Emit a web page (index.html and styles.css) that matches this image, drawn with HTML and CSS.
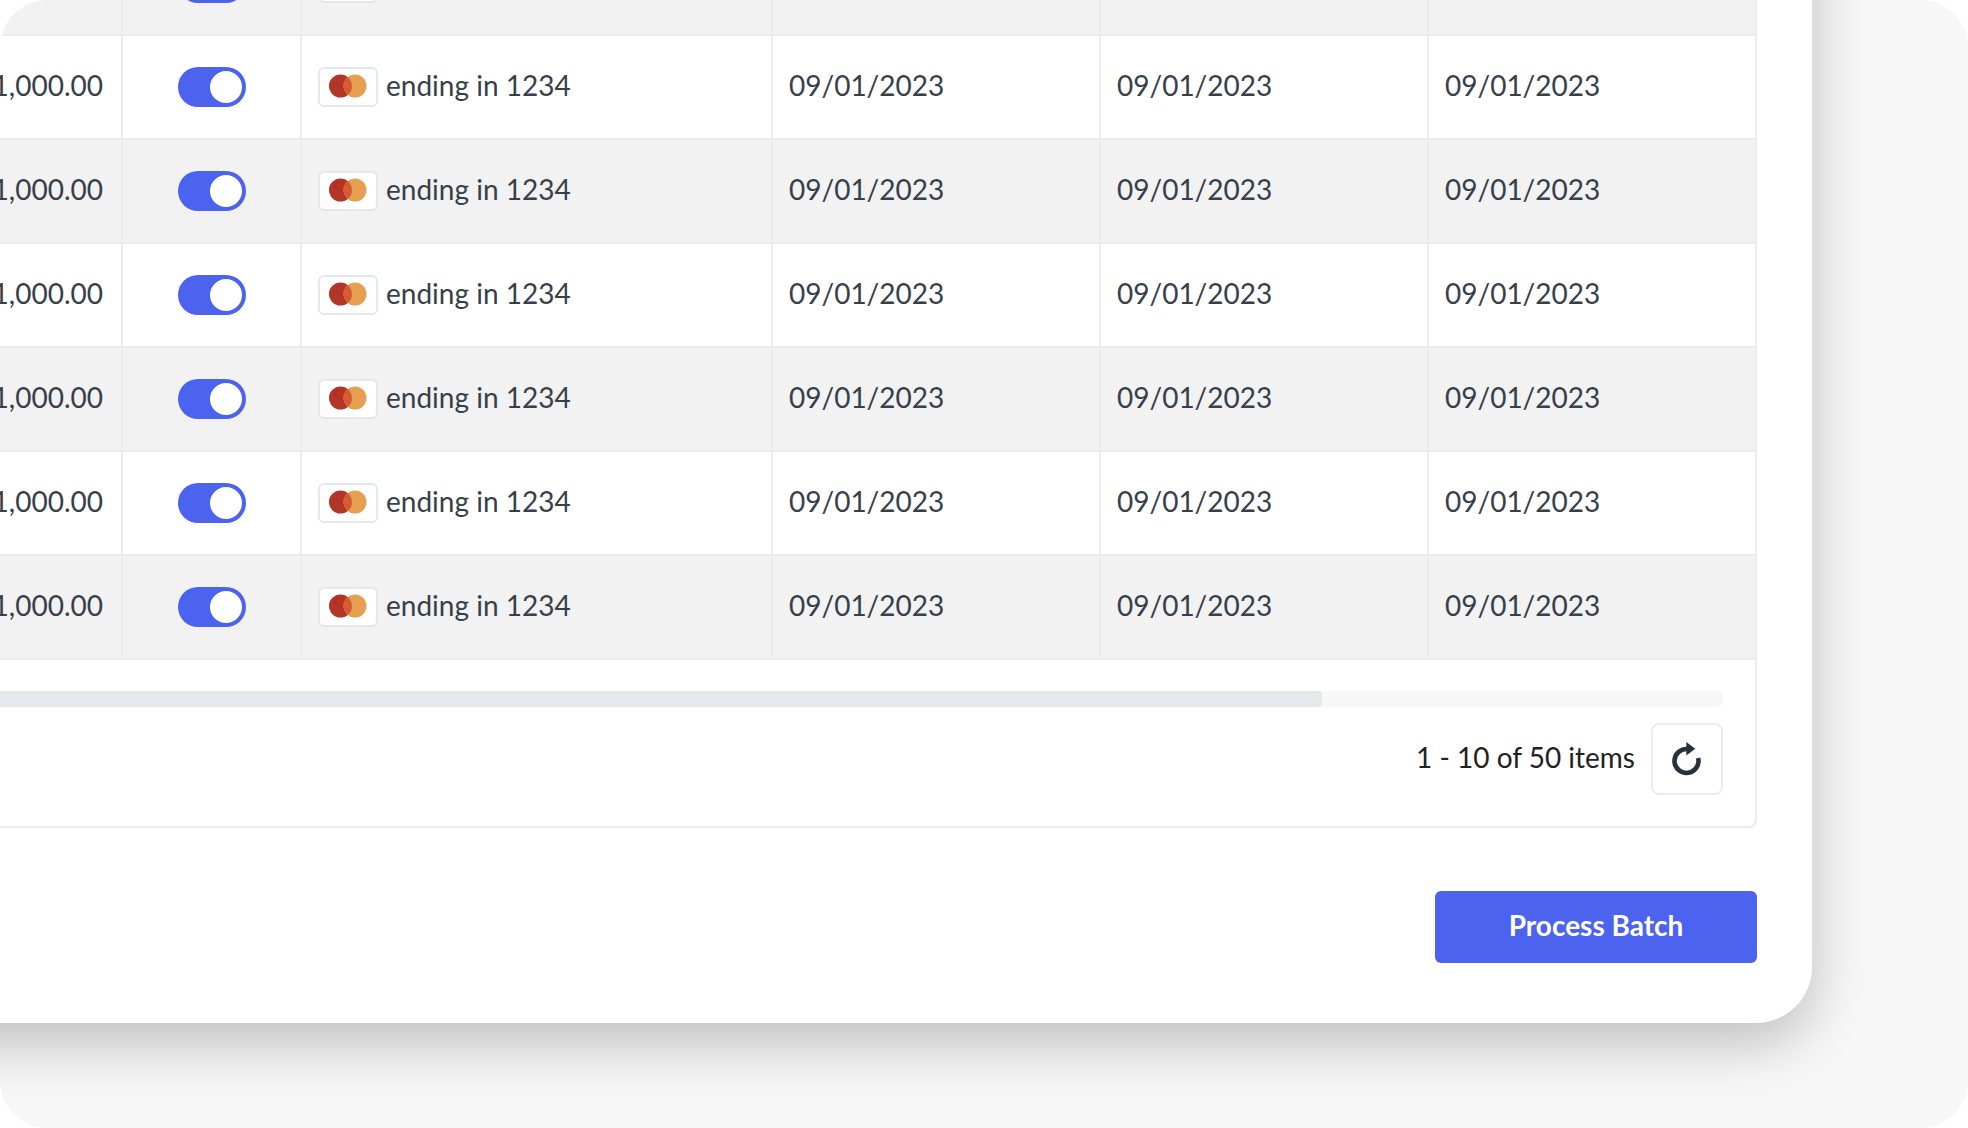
FILE: index.html
```html
<!DOCTYPE html>
<html lang="en">
<head>
  <meta charset="UTF-8">
  <meta name="viewport" content="width=device-width, initial-scale=1.0">
  <title>Batch Payments</title>
  <link rel="stylesheet" href="styles.css">
</head>
<body>
  <svg class="defs" aria-hidden="true">
    <symbol id="mastercard" viewBox="0 0 56 36">
      <circle cx="20.500" cy="17" r="11.500" fill="#b23527"/>
      <circle cx="35" cy="17" r="11.500" fill="#e5a04f"/>
      <path d="M27.750 8.100a11.500 11.500 0 0 1 0 17.800a11.500 11.500 0 0 1 0-17.800z" fill="#d85a32"/>
    </symbol>
  </svg>

  <div class="stage">
    <main class="panel">
      <table class="payments">
        <colgroup>
          <col class="col-amount">
          <col class="col-toggle">
          <col class="col-card">
          <col>
          <col>
          <col>
        </colgroup>
        <tbody id="rows"></tbody>
      </table>

      <div class="table-footer">
        <div class="scroll-track"><div class="scroll-thumb"></div></div>
        <div class="pager">
          <span class="count">1 - 10 of 50 items</span>
          <button class="refresh" type="button" aria-label="Refresh">
            <svg viewBox="0 0 36 36" width="36" height="36">
              <path d="M29.100 17A12 12 0 1 1 18.500 8" fill="none" stroke="#27323d" stroke-width="4.600"/>
              <path d="M17.300 1l9 6.700l-9 6.700z" fill="#27323d"/>
            </svg>
          </button>
        </div>
      </div>

      <div class="actions">
        <button class="process" type="button">Process Batch</button>
      </div>
    </main>
  </div>

  <script>
    const rows = document.getElementById('rows');

    for (let i = 0; i < 7; i++) {
      const row = document.createElement('tr');
      row.innerHTML = `
        <td class="amount"><span>1,000.00</span></td>
        <td class="toggle-cell"><input class="toggle" type="checkbox" aria-label="Include payment" checked></td>
        <td class="card-cell">
          <div class="card">
            <svg class="card-logo"><use href="#mastercard"/></svg>
            <span>ending in 1234</span>
          </div>
        </td>
        <td>09/01/2023</td>
        <td>09/01/2023</td>
        <td>09/01/2023</td>`;
      rows.appendChild(row);
    }
  </script>
</body>
</html>
```
FILE: styles.css
```css
* {
  box-sizing: border-box;
}

body {
  margin: 0;
  background: #fff;
  color: #36404a;
  font-family: Lato, "Liberation Sans", sans-serif;
  font-size: 28px;
  line-height: 36px;
}

.defs {
  display: none;
}

.stage {
  min-height: 100vh;
  padding-right: 156px;
  overflow: hidden;
  background: #f7f7f7;
  border-radius: 48px;
}

/* the panel runs off the top and left of the stage */
.panel {
  margin: -172px 0 0 -80px;
  padding: 104px 55px 60px 80px;
  background: #fff;
  border-radius: 0 0 56px 0;
  box-shadow: 0 20px 56px rgba(0, 0, 0, 0.23);
}

.payments {
  width: 100%;
  table-layout: fixed;
  border-collapse: separate;
  border-spacing: 0;
}

.col-amount {
  width: 123px;
}

.col-toggle {
  width: 179px;
}

.col-card {
  width: 471px;
}

.payments td {
  height: 104px;
  padding: 0 16px 4px;
  border-right: 2px solid #ebecf0;
  border-bottom: 2px solid #ebecf0;
  white-space: nowrap;
}

.payments tr:nth-child(odd) {
  background: #f2f2f2;
}

.payments .amount {
  padding: 0 18px 4px 0;
}

.amount span {
  display: flex;
  justify-content: flex-end;
}

.payments .toggle-cell {
  padding: 0;
}

.payments .card-cell {
  padding: 0 16px;
}

.toggle {
  appearance: none;
  display: flex;
  justify-content: flex-end;
  width: 68px;
  height: 40px;
  margin: 0 auto;
  padding: 4px;
  background: #4c63ef;
  border-radius: 20px;
  cursor: pointer;
}

.toggle::before {
  content: "";
  width: 32px;
  height: 32px;
  background: #fff;
  border-radius: 50%;
}

.toggle:not(:checked) {
  justify-content: flex-start;
  background: #c4c7d0;
}

.card {
  display: flex;
  align-items: flex-start;
  gap: 8px;
}

.card-logo {
  width: 60px;
  height: 40px;
  background: #fff;
  border: 2px solid #e4e8ec;
  border-radius: 6px;
}

.table-footer {
  padding: 31px 32px 31px 0;
  border: 2px solid #ebecf0;
  border-width: 0 2px 2px 0;
  border-radius: 0 0 8px 0;
}

.scroll-track {
  height: 16px;
  background: #f7f7f7;
  border-radius: 0 6px 6px 0;
}

.scroll-thumb {
  width: 76.7%;
  height: 16px;
  background: #e7e8ec;
  border-radius: 0 4px 4px 0;
}

.pager {
  display: flex;
  justify-content: flex-end;
  align-items: center;
  gap: 16px;
  margin-top: 16px;
  color: #222;
}

.count {
  padding-bottom: 4px;
}

.refresh {
  display: flex;
  justify-content: center;
  align-items: center;
  width: 72px;
  height: 72px;
  padding: 0;
  background: #fff;
  border: 2px solid #ebecf0;
  border-radius: 8px;
  cursor: pointer;
}

.actions {
  display: flex;
  justify-content: flex-end;
  margin-top: 63px;
}

.process {
  width: 322px;
  height: 72px;
  padding: 0 0 4px;
  background: #4c63ef;
  border: 0;
  border-radius: 6px;
  color: #fff;
  font: inherit;
  font-weight: 700;
  cursor: pointer;
}
```
